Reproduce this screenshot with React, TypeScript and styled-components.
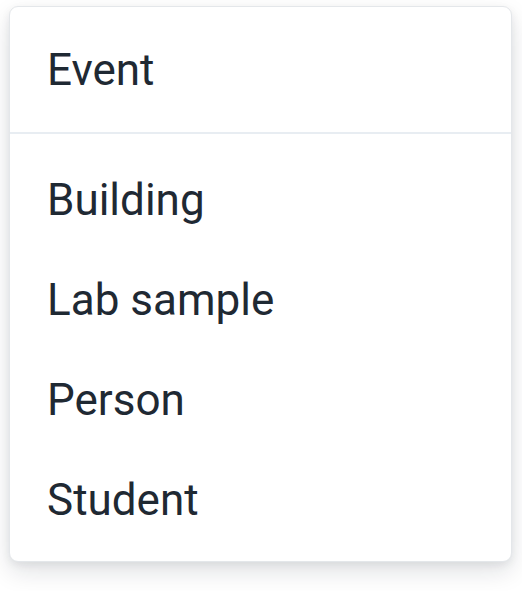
import React from "react";
import styled, { createGlobalStyle } from "styled-components";

const Global = createGlobalStyle`
  html, body { margin: 0; padding: 0; background: #ffffff; }
  body { font-family: Roboto, "Liberation Sans", sans-serif; }
`;

const Page = styled.div`
  padding: 6px 10px 30px 9px;
`;

const Menu = styled.div`
  width: 503px;
  box-sizing: border-box;
  background: #ffffff;
  border: 1px solid #e4e7ea;
  border-radius: 9px;
  box-shadow: 0 10px 24px rgba(15, 23, 42, 0.12), 0 3px 8px rgba(15, 23, 42, 0.07);
  overflow: hidden;
`;

const Header = styled.div`
  height: 125px;
  display: flex;
  align-items: center;
  padding-left: 37px;
  border-bottom: 2px solid #e8edf2;
`;

const List = styled.ul`
  list-style: none;
  margin: 0;
  padding: 16px 0 11px;
`;

const Item = styled.li`
  height: 100px;
  display: flex;
  align-items: center;
  padding-left: 37px;
`;

const Label = styled.span`
  font-family: Roboto, "Liberation Sans", sans-serif;
  font-size: 44px;
  line-height: 1;
  color: #1f2933;
`;

const items = ["Building", "Lab sample", "Person", "Student"];

export default function App() {
  return (
    <>
      <Global />
      <Page>
        <Menu>
          <Header>
            <Label>Event</Label>
          </Header>
          <List>
            {items.map((t) => (
              <Item key={t}>
                <Label>{t}</Label>
              </Item>
            ))}
          </List>
        </Menu>
      </Page>
    </>
  );
}
